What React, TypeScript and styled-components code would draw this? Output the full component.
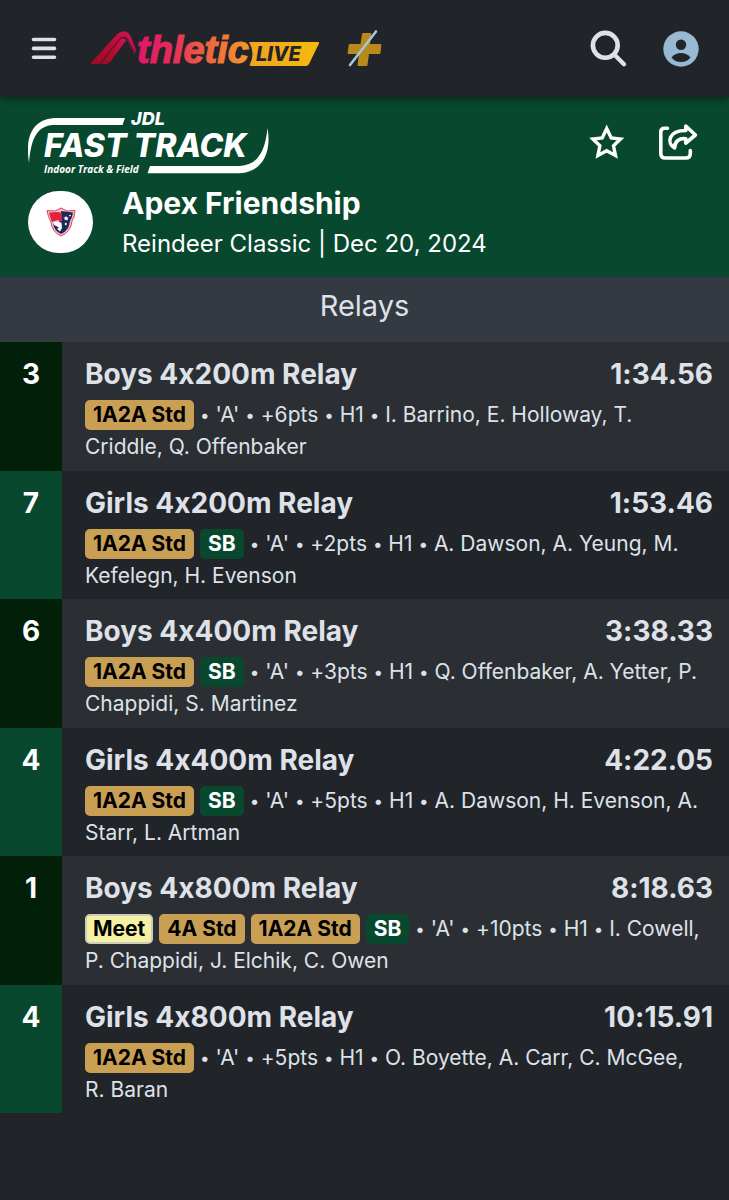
import React from "react";
import styled, { createGlobalStyle } from "styled-components";

const GlobalStyle = createGlobalStyle`
  * {
    box-sizing: border-box;
  }

  body {
    margin: 0;
    background: #212429;
    color: #dee2e8;
    font-family: Inter, "Liberation Sans", sans-serif;
    font-optical-sizing: none;
    font-feature-settings: "calt" 0;
  }
`;

const Page = styled("div")`
  min-height: 100vh;
  display: flex;
  flex-direction: column;
`;

const TopBar = styled("header")`
  position: relative;
  z-index: 1;
  height: 97px;
  padding: 0 30px;
  display: flex;
  align-items: center;
  justify-content: space-between;
  background: #212429;
  box-shadow: 0 1px 8px rgba(0, 0, 0, 0.6);
`;

const Group = styled("div")<{ $gap: number }>`
  display: flex;
  align-items: center;
  gap: ${(props) => props.$gap}px;
`;

const IconButton = styled("button")<{ $color?: string }>`
  display: flex;
  padding: 0;
  border: none;
  background: none;
  color: ${(props) => props.$color || "#dee2e8"};
  cursor: pointer;
`;

const LogoLink = styled("a")`
  display: flex;
  color: #ffffff;
`;

const Banner = styled("section")`
  padding: 9px 30px 14px 28px;
  background: #08482f;
  color: #ffffff;
`;

const BannerTop = styled("div")`
  display: flex;
  align-items: center;
  justify-content: space-between;
`;

const Team = styled("div")`
  margin-top: 1px;
  display: flex;
  align-items: center;
  gap: 29px;
`;

const Avatar = styled("div")`
  width: 65px;
  height: 62px;
  flex-shrink: 0;
  display: flex;
  align-items: center;
  justify-content: center;
  border-radius: 32px;
  background: #ffffff;
`;

const TeamName = styled("h1")`
  margin: 0;
  font-size: 30px;
  line-height: 44px;
  font-weight: 700;
`;

const MeetName = styled("p")`
  margin: 0;
  font-size: 24px;
  line-height: 38px;
`;

const SectionTitle = styled("h2")`
  margin: 0;
  padding: 9px 0 16px;
  background: #343a42;
  text-align: center;
  font-size: 29px;
  line-height: 40px;
  font-weight: 400;
`;

const ResultList = styled("ul")`
  margin: 0;
  padding: 0;
  list-style: none;
`;

const Place = styled("div")`
  width: 62px;
  flex-shrink: 0;
  padding-top: 13px;
  background: #08482f;
  color: #ffffff;
  text-align: center;
  font-size: 28px;
  line-height: 38px;
  font-weight: 700;
`;

const Result = styled("li")`
  display: flex;

  &:nth-child(odd) {
    background: #2b2f33;
  }

  &:nth-child(odd) ${Place} {
    background: #021f09;
  }
`;

const ResultBody = styled("div")`
  flex: 1;
  min-width: 0;
  padding: 13px 16px 7px 23px;

  ${Result}:nth-child(odd) & {
    padding-bottom: 8px;
  }
`;

const ResultHead = styled("div")`
  display: flex;
  justify-content: space-between;
  font-size: 28px;
  line-height: 38px;
  font-weight: 700;
`;

const EventName = styled("h3")`
  margin: 0;
  font-size: 28px;
  font-weight: 700;
`;

const Details = styled("p")`
  margin: 6px 0 0;
  font-size: 21px;
  line-height: 32px;
`;

const badgeColors = {
  std: { bg: "#c89f53", text: "#000000", border: "#c89f53" },
  best: { bg: "#08482f", text: "#ffffff", border: "#08482f" },
  meet: { bg: "#f4f1a2", text: "#000000", border: "#cdcbbb" },
};

const Badge = styled("span")<{ $kind: keyof typeof badgeColors }>`
  display: inline-block;
  margin-right: 6px;
  padding: 0 6px;
  border: 2px solid ${(props) => badgeColors[props.$kind].border};
  border-radius: 5px;
  background: ${(props) => badgeColors[props.$kind].bg};
  color: ${(props) => badgeColors[props.$kind].text};
  line-height: 26px;
  font-weight: 700;
`;

const Dot = styled("span")`
  font-size: 17px;
  line-height: 20px;
  vertical-align: 1px;
`;

type BadgeInfo = { label: string; kind: keyof typeof badgeColors };

const std: BadgeInfo = { label: "1A2A Std", kind: "std" };
const std4A: BadgeInfo = { label: "4A Std", kind: "std" };
const sb: BadgeInfo = { label: "SB", kind: "best" };
const meet: BadgeInfo = { label: "Meet", kind: "meet" };

const results = [
  {
    place: 3,
    event: "Boys 4x200m Relay",
    time: "1:34.56",
    badges: [std],
    points: 6,
    runners: "I. Barrino, E. Holloway, T. Criddle, Q. Offenbaker",
  },
  {
    place: 7,
    event: "Girls 4x200m Relay",
    time: "1:53.46",
    badges: [std, sb],
    points: 2,
    runners: "A. Dawson, A. Yeung, M. Kefelegn, H. Evenson",
  },
  {
    place: 6,
    event: "Boys 4x400m Relay",
    time: "3:38.33",
    badges: [std, sb],
    points: 3,
    runners: "Q. Offenbaker, A. Yetter, P. Chappidi, S. Martinez",
  },
  {
    place: 4,
    event: "Girls 4x400m Relay",
    time: "4:22.05",
    badges: [std, sb],
    points: 5,
    runners: "A. Dawson, H. Evenson, A. Starr, L. Artman",
  },
  {
    place: 1,
    event: "Boys 4x800m Relay",
    time: "8:18.63",
    badges: [meet, std4A, std, sb],
    points: 10,
    runners: "I. Cowell, P.\u00a0Chappidi, J. Elchik, C. Owen",
  },
  {
    place: 4,
    event: "Girls 4x800m Relay",
    time: "10:15.91",
    badges: [std],
    points: 5,
    runners: "O. Boyette, A. Carr, C. McGee, R.\u00a0Baran",
  },
];

const MenuIcon = () => (
  <svg width="28" height="28" viewBox="30 35 28 28" aria-hidden="true">
    <path
      d="M33.5 39.5h21M33.5 48.4h21M33.5 57.3h21"
      stroke="currentColor"
      strokeWidth="3.6"
      strokeLinecap="round"
    />
  </svg>
);

const AthleticLogo = () => (
  <svg width="232" height="56" viewBox="89 21 232 56" aria-hidden="true">
    <defs>
      <linearGradient id="peak" x1="0" y1="1" x2="1" y2="0">
        <stop offset="0" stopColor="#a00a26" />
        <stop offset="0.5" stopColor="#b80c30" />
        <stop offset="1" stopColor="#d81458" />
      </linearGradient>
      <linearGradient
        id="word"
        gradientUnits="userSpaceOnUse"
        x1="137"
        y1="0"
        x2="250"
        y2="0"
      >
        <stop offset="0" stopColor="#dd1768" />
        <stop offset="0.3" stopColor="#e62a5c" />
        <stop offset="0.6" stopColor="#ee6140" />
        <stop offset="1" stopColor="#f19a2a" />
      </linearGradient>
      <linearGradient id="live" x1="0" y1="0" x2="1" y2="0">
        <stop offset="0" stopColor="#efa41f" />
        <stop offset="1" stopColor="#f6b90d" />
      </linearGradient>
    </defs>
    <path
      d="M90 64L114.5 37Q119 31.5 124 31.3Q128.5 31.5 131 37L136 50L134.5 54.5L127 40Q124.5 36 121 40L101 64Z"
      fill="url(#peak)"
    />
    <path
      d="M101.5 64L120 40.5Q124 36.5 126 40.5L111.5 60Q109 64 106 64Z"
      fill="url(#peak)"
    />
    <path
      d="M99.5 64L119 40Q124.5 34 128 40L134.5 53"
      fill="none"
      stroke="#212429"
      strokeWidth="1"
    />
    <text
      x="137"
      y="63"
      fontFamily="Liberation Sans, sans-serif"
      fontSize="38"
      fontWeight="700"
      fontStyle="italic"
      fill="url(#word)"
      stroke="url(#word)"
      strokeWidth="1.2"
    >
      thletic
    </text>
    <path
      d="M249 42H318Q319.5 42 319 43.5L309 64Q308 66 306 66H251Q249 66 250 64Q255.5 53 249 42Z"
      fill="url(#live)"
    />
    <text
      x="256"
      y="61"
      fontFamily="Inter, sans-serif"
      fontSize="20"
      fontWeight="800"
      fontStyle="italic"
      fill="#212429"
    >
      LIVE
    </text>
  </svg>
);

const PlusIcon = () => (
  <svg width="38" height="40" viewBox="346 31 38 40" aria-hidden="true">
    <path
      d="M365 35H370.5Q371.5 35 371.3 36L370 46H380.5Q381.5 46 381.4 47L380.4 55Q380.2 56 379 56H369L367.5 67Q367.3 68 366.3 68H358.5Q357.3 68 357.5 67L359 56H348.5Q347.4 56 347.6 55L348.7 47Q348.9 46 350 46H360.5L362 36Q362.2 35 363.2 35Z"
      fill="#b88a1a"
    />
    <path
      d="M376 33.5L350 67"
      stroke="#a3c6dc"
      strokeWidth="2.6"
      strokeLinecap="round"
    />
  </svg>
);

const SearchIcon = () => (
  <svg width="38" height="38" viewBox="590 30 38 38" aria-hidden="true">
    <circle
      cx="605.3"
      cy="45.3"
      r="12.4"
      fill="none"
      stroke="currentColor"
      strokeWidth="4.6"
    />
    <path
      d="M615 55.2L624 64.2"
      stroke="currentColor"
      strokeWidth="4.4"
      strokeLinecap="round"
    />
  </svg>
);

const AccountIcon = () => (
  <svg width="36" height="36" viewBox="0 0 36 36" aria-hidden="true">
    <circle cx="18" cy="18" r="17.7" fill="currentColor" />
    <circle cx="18" cy="13.8" r="5.2" fill="#212429" />
    <path
      d="M8.5 26.5Q12 22 18 22T27.5 26.5Q24 31 18 31T8.5 26.5Z"
      fill="#212429"
    />
  </svg>
);

const StarIcon = () => (
  <svg width="38" height="38" viewBox="588 124 38 38" aria-hidden="true">
    <path
      d="M606.7 128.5L611.2 138L620.5 139L613.5 145.8L615.5 155.5L606.7 150.7L597.9 155.5L599.9 145.8L592.9 139L602.2 138Z"
      fill="none"
      stroke="currentColor"
      strokeWidth="3.4"
    />
  </svg>
);

const ShareIcon = () => (
  <svg width="42" height="42" viewBox="657 122 42 42" aria-hidden="true">
    <g
      fill="none"
      stroke="currentColor"
      strokeWidth="3.6"
      strokeLinecap="round"
      strokeLinejoin="round"
    >
      <path d="M667.5 128.3H664.6Q660.8 128.3 660.8 132V153.5Q660.8 158 665.3 158H685.9Q690.3 158 690.3 153.5V150.5" />
      <path d="M685.8 126L695.4 135L685.8 143V138.8C679.5 138 674.5 141 674.6 148C666.5 143.5 668 130.5 685.8 130.5Z" />
    </g>
  </svg>
);

const FastTrackLogo = () => (
  <svg width="242" height="74" viewBox="28 106 242 74" aria-hidden="true">
    <g fill="currentColor">
      <path d="M54 118H125L122.5 125H53C38 126 31 137 29 163C25 137 32 120 54 118Z" />
      <path d="M150 166H240C256 165 265 154 267.5 128C272 153 262 172 240 173.2H147.5Z" />
      <g fontFamily="Inter, sans-serif" fontStyle="italic" fontWeight="800">
        <text x="131" y="125" fontSize="18">
          JDL
        </text>
        <text x="44" y="157" fontSize="32">
          FAST TRACK
        </text>
      </g>
      <text
        x="44"
        y="173"
        fontFamily="Open Sans, sans-serif"
        fontStyle="italic"
        fontWeight="700"
        fontSize="10"
      >
        Indoor Track &amp; Field
      </text>
    </g>
  </svg>
);

const TeamCrest = () => (
  <svg width="30" height="30" viewBox="0 0 30 30" aria-hidden="true">
    <path
      d="M1 3.5L9 4L15 1L21 4L29 3.5Q28.5 11 26 14Q25 25 15 29Q6 25 5 15Q2 10 1 3.5Z"
      fill="#f6c3cc"
      stroke="#e0405a"
      strokeWidth="1"
    />
    <path
      d="M15 4L27 5.5Q26.5 11 24 14Q23 24 15 27Q8 24 7 16L15 13Z"
      fill="#1d2b5c"
    />
    <path d="M3 5.5L12 5L16 6L16 15L12 13L6 15Q4 10 3 5.5Z" fill="#e0233c" />
    <path
      d="M7 15.5L12 14L15.5 16L16 21L14 24.5L11 22L13 20.5L8 18Z"
      fill="#ffffff"
    />
    <path
      d="M20 9l1 1.5 1.5 0-1 1.5.5 1.5-2-.8-1.5.8.5-1.5L17.5 10.500l1.5 0ZM24 7.5l1 1-1 1-1-1ZM20 15.5l1 1.5-1 1.5-1.5-1.5Z"
      fill="#ffffff"
    />
  </svg>
);

const App = () => (
  <Page>
    <GlobalStyle />
    <TopBar>
      <Group $gap={31}>
        <IconButton aria-label="Menu">
          <MenuIcon />
        </IconButton>
        <Group $gap={25}>
          <LogoLink href="#" aria-label="Athletic Live">
            <AthleticLogo />
          </LogoLink>
          <LogoLink href="#" aria-label="Plus">
            <PlusIcon />
          </LogoLink>
        </Group>
      </Group>
      <Group $gap={35}>
        <IconButton aria-label="Search">
          <SearchIcon />
        </IconButton>
        <IconButton aria-label="Account" $color="#97b9d1">
          <AccountIcon />
        </IconButton>
      </Group>
    </TopBar>

    <Banner>
      <BannerTop>
        <LogoLink href="#" aria-label="JDL Fast Track">
          <FastTrackLogo />
        </LogoLink>
        <Group $gap={31}>
          <IconButton aria-label="Favorite" $color="#ffffff">
            <StarIcon />
          </IconButton>
          <IconButton aria-label="Share" $color="#ffffff">
            <ShareIcon />
          </IconButton>
        </Group>
      </BannerTop>
      <Team>
        <Avatar>
          <TeamCrest />
        </Avatar>
        <div>
          <TeamName>Apex Friendship</TeamName>
          <MeetName>Reindeer Classic | Dec 20, 2024</MeetName>
        </div>
      </Team>
    </Banner>

    <main>
      <SectionTitle>Relays</SectionTitle>
      <ResultList>
        {results.map((result) => (
          <Result key={result.event}>
            <Place>{result.place}</Place>
            <ResultBody>
              <ResultHead>
                <EventName>{result.event}</EventName>
                <span>{result.time}</span>
              </ResultHead>
              <Details>
                {result.badges.map((badge) => (
                  <Badge key={badge.label} $kind={badge.kind}>
                    {badge.label}
                  </Badge>
                ))}
                <Dot>•</Dot> 'A' <Dot>•</Dot> +{result.points}pts{" "}
                <Dot>•</Dot> H1 <Dot>•</Dot> {result.runners}
              </Details>
            </ResultBody>
          </Result>
        ))}
      </ResultList>
    </main>
  </Page>
);

export default App;
